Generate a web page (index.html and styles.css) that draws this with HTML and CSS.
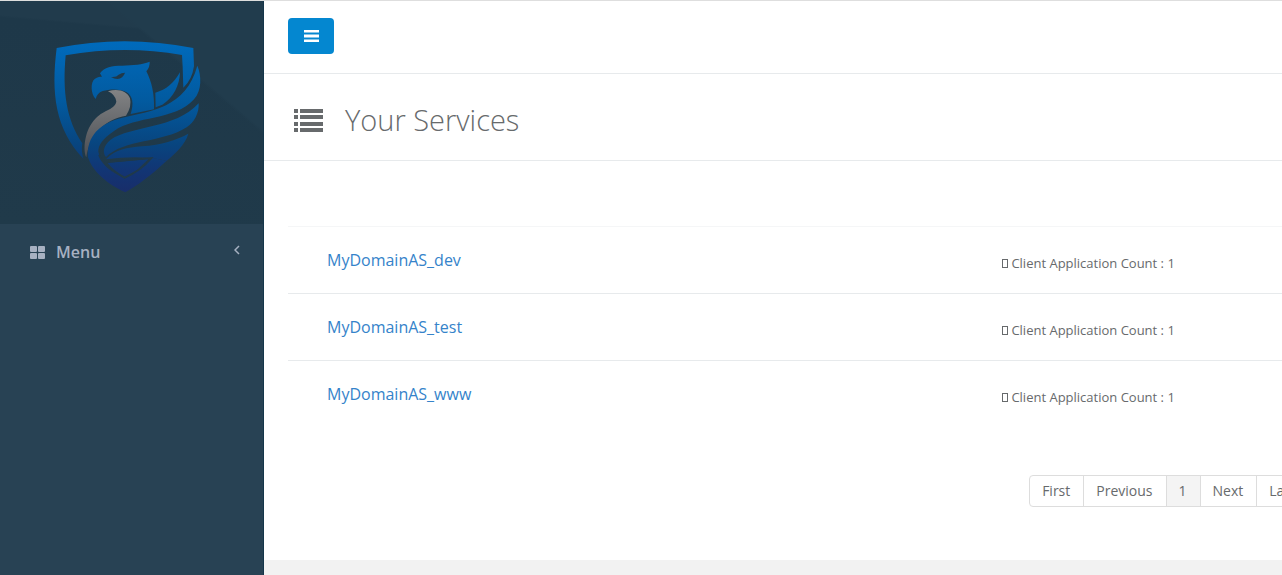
FILE: index.html
```
<!DOCTYPE html>
<html lang="en">
<head>
  <meta charset="UTF-8" />
  <title>Your Services</title>
  <link rel="stylesheet" href="styles.css">
</head>
<body>
  <nav class="sidebar">
    <div class="profile">
      <svg class="logo" viewBox="0 0 495 510" role="img" aria-label="Logo">
        <defs>
          <linearGradient id="blue" gradientUnits="userSpaceOnUse" x1="0" y1="30" x2="0" y2="490">
            <stop offset="0" stop-color="#006bbd" />
            <stop offset="0.4" stop-color="#025a9f" />
            <stop offset="0.68" stop-color="#08457f" />
            <stop offset="0.85" stop-color="#123574" />
            <stop offset="1" stop-color="#192d69" />
          </linearGradient>
          <linearGradient id="grey" x1="0" y1="0" x2="0" y2="1">
            <stop offset="0" stop-color="#828384" />
            <stop offset="1" stop-color="#4b4e54" />
          </linearGradient>
        </defs>
        <!-- shield -->
        <path fill="url(#blue)" d="M35 54Q238 13 445 54L447 108Q441 150 415 173L413 110L411 75Q238 44 62 76C52 185 64 270 112 340Q108 362 115 386C30 296 18 190 35 54Z" />
        <!-- head -->
        <path fill="url(#blue)" d="M152 207C137 192 136 156 149 147C158 140 166 140 171 140L165 130C178 111 200 107 232 107C266 105 292 104 314 95Q315 111 304 124C320 155 329 193 327 238L257 252C267 222 263 197 245 187C225 175 194 177 173 183Q155 190 152 207Z" />
        <path class="cut" d="M198 141Q214 143 221 134Q229 128 240 128Q234 146 217 147Q207 147 198 141Z" />
        <!-- neck -->
        <path fill="url(#grey)" d="M189 184C220 174 247 184 255 205Q261 230 243 257C184 266 134 310 124 382C113 361 118 300 151 266C181 237 211 239 214 214Q211 194 189 184Z" />
        <!-- wing -->
        <path fill="url(#blue)" d="M331 188C364 180 387 158 405 127C404 166 385 203 352 224L332 232Z" />
        <path fill="url(#blue)" d="M457 107C469 136 472 180 447 208C389 273 271 257 207 303C171 328 160 345 160 365Q165 393 192 416L239 446L280 421L322 384L365 392C323 432 282 463 241 487C188 464 142 424 129 382C124 318 165 279 233 263C316 243 423 234 457 107Z" />
        <path fill="url(#blue)" d="M461 220C463 249 447 278 425 292C349 340 238 327 183 381C172 368 175 347 196 330C260 286 390 298 461 220Z" />
        <path fill="url(#blue)" d="M183 388C213 357 245 353 291 349C351 344 392 331 430 311C420 345 389 372 365 392L322 384C278 380 230 381 183 388Z" />
        <path fill="url(#blue)" d="M188 399L310 388L276 420L239 440Q206 422 188 399Z" />
        <path class="line" d="M162 375C175 408 206 426 239 443Q286 424 320 384L186 396" />
      </svg>
    </div>
    <a class="menu-item" href="#">
      <svg class="menu-icon" viewBox="0 0 15 13" aria-hidden="true">
        <rect x="0" y="0" width="7" height="6" rx="1" /><rect x="8" y="0" width="7" height="6" rx="1" />
        <rect x="0" y="7" width="7" height="6" rx="1" /><rect x="8" y="7" width="7" height="6" rx="1" />
      </svg>
      <span>Menu</span>
      <svg class="arrow" viewBox="0 0 12 20" aria-hidden="true"><path d="M10 2L2 10L10 18" /></svg>
    </a>
  </nav>

  <div class="page">
    <header class="topbar">
      <button class="toggle" type="button" aria-label="Toggle menu">
        <svg viewBox="0 0 30 24" aria-hidden="true"><path d="M0 0h30v5H0zM0 9h30v6H0zM0 19h30v5H0z" /></svg>
      </button>
    </header>

    <div class="heading">
      <svg viewBox="0 0 29 23" aria-hidden="true">
        <path d="M0 0h4v4H0zM6 0h23v4H6zM0 6h4v4H0zM6 6h23v4H6zM0 13h4v4H0zM6 13h23v4H6zM0 19h4v4H0zM6 19h23v4H6z" />
      </svg>
      <h1>Your Services</h1>
    </div>

    <main class="content">
      <table class="services">
        <tr>
          <td><a href="#">MyDomainAS_dev</a></td>
          <td class="count"><svg viewBox="0 0 6 9" aria-hidden="true"><rect x="0.5" y="0.5" width="5" height="8" /></svg> Client Application Count : 1</td>
        </tr>
        <tr>
          <td><a href="#">MyDomainAS_test</a></td>
          <td class="count"><svg viewBox="0 0 6 9" aria-hidden="true"><rect x="0.5" y="0.5" width="5" height="8" /></svg> Client Application Count : 1</td>
        </tr>
        <tr>
          <td><a href="#">MyDomainAS_www</a></td>
          <td class="count"><svg viewBox="0 0 6 9" aria-hidden="true"><rect x="0.5" y="0.5" width="5" height="8" /></svg> Client Application Count : 1</td>
        </tr>
      </table>

      <div class="pagination">
        <a href="#">First</a>
        <a href="#">Previous</a>
        <a class="active" href="#">1</a>
        <a href="#">Next</a>
        <a href="#">Last</a>
      </div>
    </main>
  </div>
</body>
</html>
```
FILE: styles.css
```
* { box-sizing: border-box; }
body { margin: 0; font-family: "Open Sans", sans-serif; font-size: 13px; color: #676a6c; display: flex; min-height: 100vh; background: #f2f2f2; border-top: 1px solid #dedede; overflow-x: hidden; }
a { text-decoration: none; }
svg { display: block; }

.sidebar { width: 264px; flex-shrink: 0; background: #284254; border-right: 1px solid #15364a; }
.profile { padding: 29px 45px 24px; background: linear-gradient(40deg, transparent 70%, #213c4d 71%), linear-gradient(185deg, #213b4c 15%, #1e3849 16%, #203a4a 100%); }
.logo { width: 165px; height: 170px; }
.logo .cut { fill: #20394a; }
.logo .line { fill: none; stroke: #20394a; stroke-width: 5; }
.menu-item { display: flex; align-items: center; padding: 17px 23px 16px 30px; color: #a7b1c2; font-size: 16px; line-height: 22px; font-weight: 600; }
.menu-icon { width: 15px; height: 13px; margin-right: 11px; fill: #a7b1c2; }
.arrow { width: 6px; height: 10px; margin: 0 0 5px auto; fill: none; stroke: #a7b1c2; stroke-width: 3; }

.page { flex: 1; min-width: 0; overflow: hidden; }
.topbar { background: #fff; padding: 17px 24px 19px; border-bottom: 1px solid #e7eaec; }
.toggle { display: flex; align-items: center; justify-content: center; width: 46px; height: 36px; padding: 0; background: #0487d0; border: none; border-radius: 4px; cursor: pointer; }
.toggle svg { width: 15px; height: 12px; fill: #fff; }
.toggle:hover { background: #0376b6; }

.heading { display: flex; align-items: center; padding: 26px 30px 20px; background: #fff; border-bottom: 1px solid #e7eaec; }
.heading svg { width: 29px; height: 23px; margin-right: 22px; fill: #676a6c; }
.heading h1 { margin: 0; font-size: 29px; line-height: 40px; font-weight: 300; }

/* runs past the right edge, the page clips it */
.content { width: calc(100% + 52px); padding: 65px 24px 53px; background: #fff; }
.services { width: 100%; border-collapse: collapse; }
.services tr { height: 67px; border-top: 1px solid #e7eaec; }
.services tr:first-child { border-top-color: #f5f6f7; }
.services td { padding: 0 0 0 39px; font-size: 16px; line-height: 22px; }
.services a { color: #3583ca; }
.services td.count { width: 308px; padding: 5px 0 0; font-size: 13px; line-height: 20px; }
.count svg { display: inline-block; width: 6px; height: 9px; vertical-align: 0; fill: none; stroke: #676a6c; }

.pagination { display: flex; justify-content: flex-end; margin-top: 47px; font-size: 14px; line-height: 20px; }
.pagination a { padding: 5px 13px 5px 12px; color: #676a6c; border: 1px solid #ddd; margin-left: -1px; }
.pagination a:first-child { border-radius: 4px 0 0 4px; }
.pagination a:last-child { border-radius: 0 4px 4px 0; }
.pagination a.active { background: #f4f4f4; }
```
